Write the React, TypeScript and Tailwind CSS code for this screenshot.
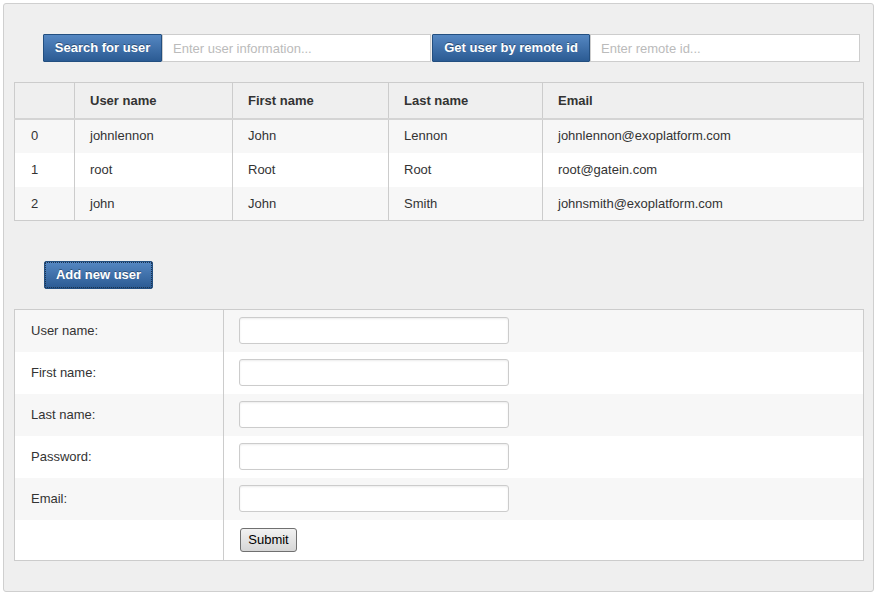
import { FC } from "react";

const users = [
  { id: 0, userName: "johnlennon", firstName: "John", lastName: "Lennon", email: "johnlennon@exoplatform.com" },
  { id: 1, userName: "root", firstName: "Root", lastName: "Root", email: "root@gatein.com" },
  { id: 2, userName: "john", firstName: "John", lastName: "Smith", email: "johnsmith@exoplatform.com" },
];

const fields = ["User name:", "First name:", "Last name:", "Password:", "Email:"];

const blueBtn =
  "h-[28px] border border-[#234f80] bg-gradient-to-b from-[#5587c2] to-[#2b5b93] text-white font-bold text-[13px] [text-shadow:0_-1px_0_rgba(0,0,0,0.35)] rounded-[1px]";

const App: FC = () => {
  return (
    <div className="min-h-[593px] bg-white pt-[3px] pl-[3px] text-[#333]" style={{ fontFamily: '"Liberation Sans", Arial, sans-serif' }}>
      <div className="w-[871px] h-[589px] border border-[#cfcfcf] rounded-[3px] bg-[#efefef] px-[10px]">
        {/* search bar */}
        <div className="flex pt-[30px] pl-[29px]">
          <button className={`${blueBtn} w-[119px]`}>Search for user</button>
          <input
            className="w-[269px] h-[28px] border border-[#cdcdcd] bg-white px-[10px] text-[13px] placeholder:text-[#bbb] outline-none"
            placeholder="Enter user information..."
          />
          <button className={`${blueBtn} w-[158px] ml-[1px]`}>Get user by remote id</button>
          <input
            className="w-[270px] h-[28px] border border-[#cdcdcd] bg-white px-[10px] text-[13px] placeholder:text-[#bbb] outline-none"
            placeholder="Enter remote id..."
          />
        </div>

        {/* user list */}
        <table className="mt-[20px] w-[850px] border-collapse border border-[#cccccc] text-[13px] table-fixed">
          <colgroup>
            <col className="w-[60px]" />
            <col className="w-[158px]" />
            <col className="w-[156px]" />
            <col className="w-[154px]" />
            <col />
          </colgroup>
          <thead>
            <tr className="h-[36px] bg-[#efefef] border-b-2 border-[#d4d4d4]">
              <th className="border-r border-[#cccccc]"></th>
              <th className="text-left font-bold px-[15px] border-r border-[#cccccc]">User name</th>
              <th className="text-left font-bold px-[15px] border-r border-[#cccccc]">First name</th>
              <th className="text-left font-bold px-[15px] border-r border-[#cccccc]">Last name</th>
              <th className="text-left font-bold px-[15px]">Email</th>
            </tr>
          </thead>
          <tbody>
            {users.map((u, i) => (
              <tr key={u.id} className={`h-[34px] ${i % 2 === 0 ? "bg-[#f7f7f7]" : "bg-white"}`}>
                <td className="px-[16px] border-r border-[#cccccc]">{u.id}</td>
                <td className="px-[15px] border-r border-[#cccccc]">{u.userName}</td>
                <td className="px-[15px] border-r border-[#cccccc]">{u.firstName}</td>
                <td className="px-[15px] border-r border-[#cccccc]">{u.lastName}</td>
                <td className="px-[15px]">{u.email}</td>
              </tr>
            ))}
          </tbody>
        </table>

        {/* add user */}
        <div className="pt-[40px] pl-[30px]">
          <button className={`${blueBtn} block w-[109px] rounded-[2px] outline-1 outline-dotted outline-[#1b3350] -outline-offset-2`}>
            Add new user
          </button>
        </div>

        <table className="mt-[20px] w-[850px] border-collapse border border-[#cccccc] text-[13px] table-fixed">
          <colgroup>
            <col className="w-[209px]" />
            <col />
          </colgroup>
          <tbody>
            {fields.map((f, i) => (
              <tr key={f} className={`h-[42px] ${i % 2 === 0 ? "bg-[#f7f7f7]" : "bg-white"}`}>
                <td className="px-[16px] border-r border-[#cccccc]">{f}</td>
                <td className="px-[15px]">
                  <input
                    type={f === "Password:" ? "password" : "text"}
                    className="block w-[270px] h-[27px] border border-[#cccccc] rounded-[3px] bg-white shadow-[inset_0_1px_2px_rgba(0,0,0,0.08)] outline-none"
                  />
                </td>
              </tr>
            ))}
            <tr className="h-[41px] bg-white">
              <td className="border-r border-[#cccccc]"></td>
              <td className="px-[16px]">
                <button className="w-[57px] h-[24px] border border-[#707070] rounded-[3px] bg-gradient-to-b from-[#f2f2f2] to-[#d6d6d6] text-[13px] text-black">
                  Submit
                </button>
              </td>
            </tr>
          </tbody>
        </table>
      </div>
    </div>
  );
};

export default App;
